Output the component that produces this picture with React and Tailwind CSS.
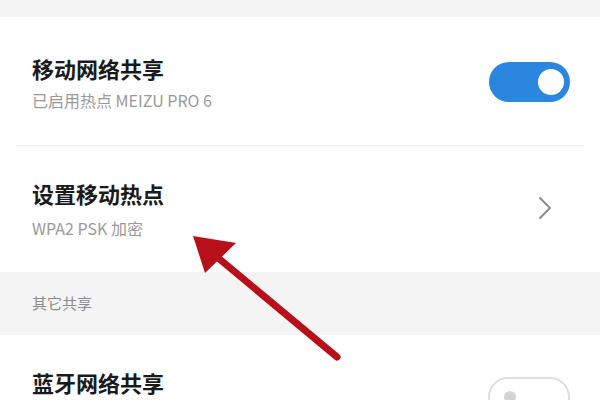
const font = { fontFamily: '"Noto Sans CJK SC", "Noto Sans", sans-serif' };

function Toggle({ on }) {
  if (on) {
    return (
      <div className="w-[81px] h-[40px] rounded-full bg-[#2a86de] flex items-center justify-end pr-[6px]">
        <div className="w-[26px] h-[26px] rounded-full bg-white" />
      </div>
    );
  }
  return (
    <div className="w-[82px] h-[40px] rounded-full border-2 border-[#dedede] bg-white flex items-center pl-[14px]">
      <div className="w-[12px] h-[12px] rounded-full bg-[#d4d4d4]" />
    </div>
  );
}

function Chevron() {
  return (
    <svg width="14" height="24" viewBox="0 0 14 24" fill="none">
      <path d="M2 2 L12 12 L2 22" stroke="#8c8c8c" strokeWidth="2" strokeLinecap="round" strokeLinejoin="round" />
    </svg>
  );
}

function Arrow() {
  return (
    <svg className="absolute left-0 top-0" width="600" height="400" viewBox="0 0 600 400">
      <line x1="337" y1="357" x2="205" y2="247" stroke="#b8101a" strokeWidth="7" strokeLinecap="round" />
      <polygon points="193,236 236,243 205,273" fill="#b8101a" />
    </svg>
  );
}

export default function App() {
  return (
    <div className="relative w-[600px] h-[400px] overflow-hidden bg-[#f4f4f4]" style={font}>
      <div className="h-[17px]" />

      {/* Hotspot section */}
      <div className="bg-white">
        <div className="flex items-center justify-between pl-[32px] pr-[30px] h-[128px] pt-[2px]">
          <div className="flex flex-col">
            <span className="text-[22px] font-semibold text-[#1a1a1a] leading-[30px]">移动网络共享</span>
            <span className="text-[16px] text-[#999999] leading-[22px] mt-[6px]">已启用热点 MEIZU PRO 6</span>
          </div>
          <Toggle on />
        </div>
        <div className="mx-[16px] h-px bg-[#ececec]" />
        <div className="flex items-center justify-between pl-[32px] pr-[48px] h-[126px] pb-[2px]">
          <div className="flex flex-col">
            <span className="text-[22px] font-semibold text-[#1a1a1a] leading-[30px]">设置移动热点</span>
            <span className="text-[16px] text-[#999999] leading-[22px] mt-[9px]">WPA2 PSK 加密</span>
          </div>
          <Chevron />
        </div>
      </div>

      {/* Other sharing header */}
      <div className="h-[63px] flex items-center pl-[32px]">
        <span className="text-[15px] text-[#8a8a8a]">其它共享</span>
      </div>

      {/* Bluetooth */}
      <div className="bg-white h-[100px] flex items-start justify-between pl-[32px] pr-[30px] pt-[32px]">
        <span className="text-[22px] font-semibold text-[#1a1a1a] leading-[30px]">蓝牙网络共享</span>
        <div className="mt-[10px]">
          <Toggle on={false} />
        </div>
      </div>

      <Arrow />
    </div>
  );
}
